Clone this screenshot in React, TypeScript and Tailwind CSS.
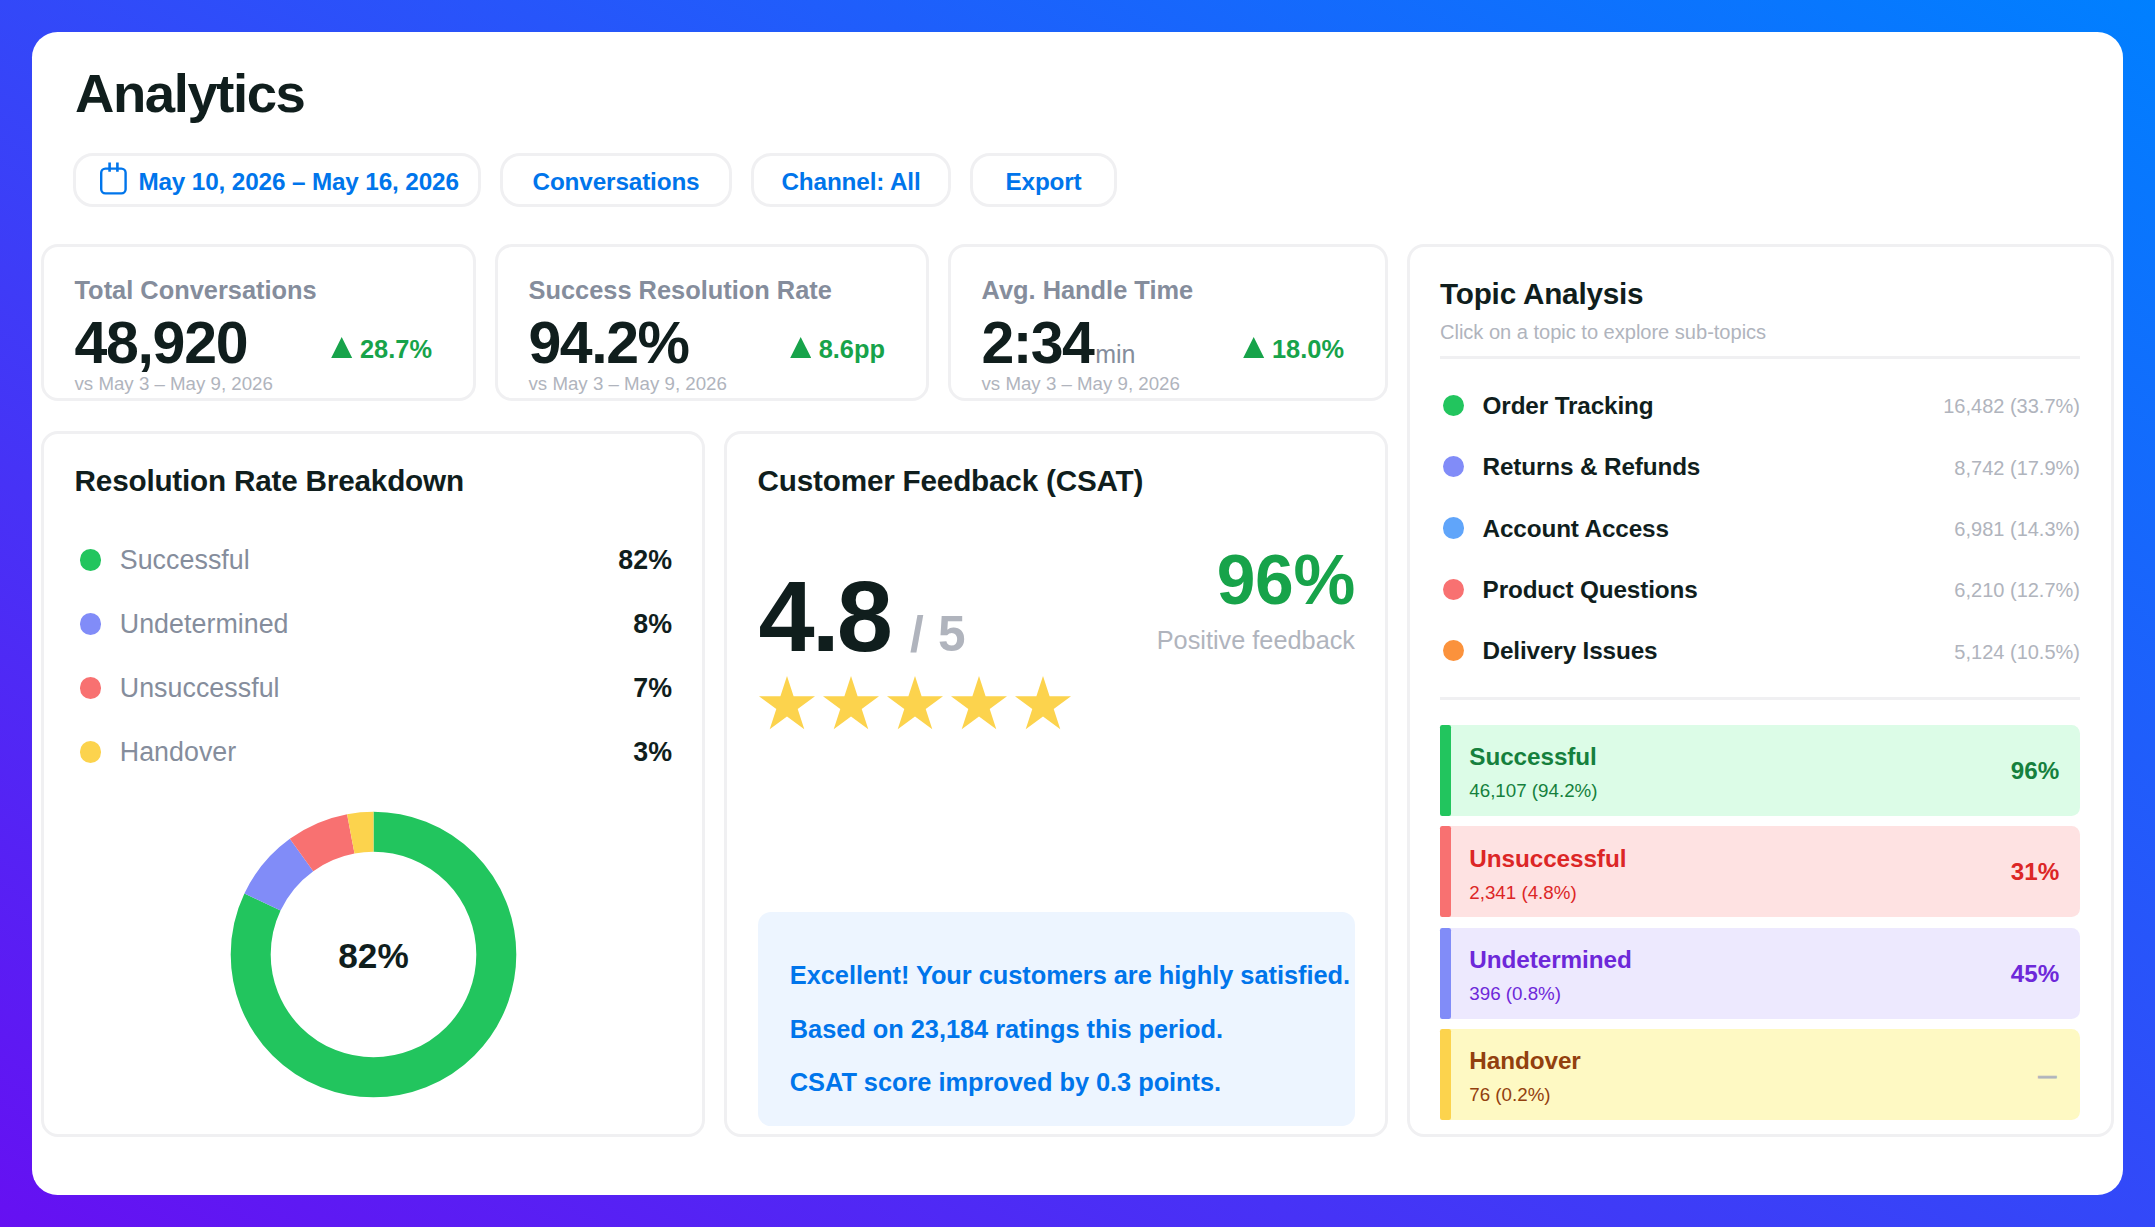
import type { ReactNode } from 'react';

const breakdown = [
  { label: 'Successful', value: 82, color: '#22c55e', dot: 'bg-[#22c55e]' },
  { label: 'Undetermined', value: 8, color: '#818cf8', dot: 'bg-[#818cf8]' },
  { label: 'Unsuccessful', value: 7, color: '#f87171', dot: 'bg-[#f87171]' },
  { label: 'Handover', value: 3, color: '#fcd34d', dot: 'bg-[#fcd34d]' },
];

const topics = [
  { name: 'Order Tracking', value: '16,482 (33.7%)', dot: 'bg-[#22c55e]' },
  { name: 'Returns & Refunds', value: '8,742 (17.9%)', dot: 'bg-[#818cf8]' },
  { name: 'Account Access', value: '6,981 (14.3%)', dot: 'bg-[#60a5fa]' },
  { name: 'Product Questions', value: '6,210 (12.7%)', dot: 'bg-[#f87171]' },
  { name: 'Delivery Issues', value: '5,124 (10.5%)', dot: 'bg-[#fb923c]' },
];

const bands = [
  { name: 'Successful', sub: '46,107 (94.2%)', pct: '96%', box: 'bg-[#dcfce7] text-[#15803d]', accent: 'bg-[#22c55e]' },
  { name: 'Unsuccessful', sub: '2,341 (4.8%)', pct: '31%', box: 'bg-[#fee2e2] text-[#dc2626]', accent: 'bg-[#f87171]' },
  { name: 'Undetermined', sub: '396 (0.8%)', pct: '45%', box: 'bg-[#ede9fe] text-[#6d28d9]', accent: 'bg-[#818cf8]' },
  { name: 'Handover', sub: '76 (0.2%)', pct: '', box: 'bg-[#fef9c3] text-[#92400e]', accent: 'bg-[#fcd34d]' },
];

function Pill({ width, children }: { width: string; children: ReactNode }) {
  return (
    <button
      className={`flex h-[54px] items-center justify-center rounded-[20px] border-[3px] border-[#f0f0f2] text-[24.3px] leading-[30px] font-bold tracking-[-0.14px] whitespace-nowrap text-[#0075eb] ${width}`}
    >
      {children}
    </button>
  );
}

function CalendarIcon() {
  return (
    <svg width="27" height="33" viewBox="0 0 27 33" fill="none" stroke="#0075eb" strokeWidth="2.4" className="-mt-[3px]">
      <rect x="1.2" y="6.6" width="24.4" height="24.8" rx="4.2" />
      <path d="M9.6 0.6v9.2M17.4 0.6v9.2" strokeWidth="2.6" />
    </svg>
  );
}

function Kpi({ width, label, value, change }: { width: string; label: string; value: ReactNode; change: string }) {
  return (
    <section
      className={`flex h-[157px] flex-col rounded-[17px] border-[3px] border-[#f0f0f2] pt-[28px] pr-[41px] pl-[30.5px] whitespace-nowrap ${width}`}
    >
      <h3 className="text-[25.4px] leading-[30px] font-bold text-[#858d9c]">{label}</h3>
      <div className="mt-[7.5px] flex h-[60px] shrink-0 justify-between">
        <div className="flex items-baseline text-[59px] leading-[60px] font-bold">{value}</div>
        <div className="mt-[21.5px] flex h-[30px] gap-[7.5px] text-[25.4px] leading-[30px] font-bold text-[#17a34a]">
          <svg width="21.4" height="21.4" viewBox="0 0 20 20" className="mt-[2.6px]">
            <path d="M10 0L20 20H0z" fill="currentColor" />
          </svg>
          {change}
        </div>
      </div>
      <p className="text-[18.7px] leading-[22px] text-[#b0b4bd]">vs May 3 – May 9, 2026</p>
    </section>
  );
}

function Heading({ children }: { children: ReactNode }) {
  return <h2 className="text-[29.7px] leading-[36px] font-bold tracking-[-0.2px] whitespace-nowrap">{children}</h2>;
}

function Donut() {
  const radius = 122.8;
  const length = 2 * Math.PI * radius;
  let start = 0;
  return (
    <svg width="287" height="287" viewBox="-143.5 -143.5 287 287" className="mt-[26.8px] self-center">
      <g transform="rotate(-90)" fill="none" strokeWidth="40">
        {breakdown.map((slice) => {
          const offset = start;
          start += slice.value;
          return (
            <circle
              key={slice.label}
              r={radius}
              stroke={slice.color}
              strokeDasharray={`${(slice.value / 100) * length} ${length}`}
              strokeDashoffset={(-offset / 100) * length}
            />
          );
        })}
      </g>
      <text x="0" y="13.8" textAnchor="middle" fill="#101e1d" className="text-[35.2px] font-bold">
        82%
      </text>
    </svg>
  );
}

function Star() {
  return (
    <svg width="56" height="54" viewBox="-28 -29.4 56 54" fill="#fcd34d">
      <path d="M0 -29.4L6.6 -9.1H28L10.7 3.5L17.3 23.8L0 11.2L-17.3 23.8L-10.7 3.5L-28 -9.1H-6.6Z" />
    </svg>
  );
}

export default function App() {
  return (
    <div className="h-[1227px] w-[2155px] overflow-hidden bg-[linear-gradient(to_top_right,#6610f2,#0080ff)] p-8 font-['Liberation_Sans',Arial,sans-serif] text-[#101e1d]">
      <main className="flex h-[1163px] w-[2091px] flex-col rounded-[25.6px] bg-white px-[9px] pt-[30px]">
        <h1 className="ml-[34px] text-[54.5px] leading-[64px] font-bold tracking-[-1.43px]">Analytics</h1>

        <div className="mt-[27px] ml-[32px] flex gap-[19px]">
          <Pill width="w-[408px]">
            <span className="flex w-full items-center pl-[24px]">
              <CalendarIcon />
              <span className="mt-[3px] ml-[11.4px]">May 10, 2026 – May 16, 2026</span>
            </span>
          </Pill>
          <Pill width="w-[232px]">
            <span className="mt-[3px]">Conversations</span>
          </Pill>
          <Pill width="w-[200px]">
            <span className="mt-[3px]">Channel: All</span>
          </Pill>
          <Pill width="w-[147px]">
            <span className="mt-[3px]">Export</span>
          </Pill>
        </div>

        <div className="mt-[37px] flex gap-[19px]">
          <div className="flex w-[1347px] flex-col gap-[30px]">
            <div className="flex gap-[19px]">
              <Kpi
                width="w-[435px]"
                label="Total Conversations"
                value={<span className="tracking-[-1.3px]">48,920</span>}
                change="28.7%"
              />
              <Kpi
                width="w-[434px]"
                label="Success Resolution Rate"
                value={<span className="tracking-[-1.45px]">94.2%</span>}
                change="8.6pp"
              />
              <Kpi
                width="w-[440px]"
                label="Avg. Handle Time"
                value={
                  <>
                    <span className="tracking-[-1.6px]">2:34</span>
                    <span className="ml-[2px] text-[25px] leading-none font-normal text-[#858d9c]">min</span>
                  </>
                }
                change="18.0%"
              />
            </div>

            <div className="flex h-[706px] gap-[19px]">
              <section className="flex w-[664px] flex-col rounded-[17px] border-[3px] border-[#f0f0f2] pt-[29px] pr-[30px] pl-[30.6px]">
                <Heading>Resolution Rate Breakdown</Heading>
                <ul className="mt-[29px]">
                  {breakdown.map((row) => (
                    <li key={row.label} className="flex h-16 items-center pl-[5.2px] text-[26.8px] leading-[32px]">
                      <span className={`size-[21.4px] rounded-full ${row.dot}`} />
                      <span className="-mt-px ml-[18.6px] tracking-[0.04px] text-[#858d9c]">{row.label}</span>
                      <span className="-mt-px ml-auto font-bold">{row.value}%</span>
                    </li>
                  ))}
                </ul>
                <Donut />
              </section>

              <section className="flex w-[664px] flex-col rounded-[17px] border-[3px] border-[#f0f0f2] pt-[29px] pr-[30px] pb-[8px] pl-[30.6px]">
                <Heading>Customer Feedback (CSAT)</Heading>
                <div className="mt-[40.5px] flex justify-between">
                  <div className="mt-[26.7px] ml-[1px]">
                    <div className="flex items-baseline leading-[100px] font-bold whitespace-nowrap">
                      <span className="text-[101px] tracking-[-3px]">4.8</span>
                      <span className="ml-[20px] text-[49.5px] leading-none tracking-[0.2px] text-[#b0b4bd]">/ 5</span>
                    </div>
                    <div className="mt-[9.8px] flex gap-[8.1px]">
                      {[0, 1, 2, 3, 4].map((n) => (
                        <Star key={n} />
                      ))}
                    </div>
                  </div>
                  <div className="text-right">
                    <div className="text-[69.5px] leading-[81px] font-bold tracking-[-0.25px] text-[#17a34a]">96%</div>
                    <div className="mt-[4px] text-[25.3px] leading-[30px] text-[#b0b4bd]">Positive feedback</div>
                  </div>
                </div>
                <div className="mt-auto h-[214px] rounded-[13px] bg-[#edf5ff] pt-[37.2px] pl-[32.2px] text-[25.4px] leading-[53.35px] font-bold tracking-[-0.04px] whitespace-nowrap text-[#0075eb]">
                  <p>Excellent! Your customers are highly satisfied.</p>
                  <p>Based on 23,184 ratings this period.</p>
                  <p>CSAT score improved by 0.3 points.</p>
                </div>
              </section>
            </div>
          </div>

          <section className="flex h-[893px] w-[707px] flex-col rounded-[17px] border-[3px] border-[#f0f0f2] pt-[29px] pr-[31px] pl-[30px]">
            <Heading>Topic Analysis</Heading>
            <p className="mt-[7.5px] text-[20.1px] leading-[24px] tracking-[-0.03px] text-[#b0b4bd]">
              Click on a topic to explore sub-topics
            </p>
            <div className="mt-[12.6px] h-[2.7px] shrink-0 bg-[#f0f0f2]" />
            <ul className="mt-[16px]">
              {topics.map((topic) => (
                <li key={topic.name} className="flex h-[61.33px] items-center pl-[3px] leading-[30px]">
                  <span className={`size-[21.4px] rounded-full ${topic.dot}`} />
                  <span className="mt-px ml-[18.2px] text-[24.3px] font-bold tracking-[-0.14px]">{topic.name}</span>
                  <span className="mt-[2px] ml-auto text-[20px] text-[#b0b4bd]">{topic.value}</span>
                </li>
              ))}
            </ul>
            <div className="mt-[15.8px] h-[2.7px] shrink-0 bg-[#f0f0f2]" />
            <ul className="mt-[25.2px] flex flex-col gap-[10.7px]">
              {bands.map((band) => (
                <li key={band.name} className={`flex h-[90.7px] rounded-[8.5px] pr-[20.8px] ${band.box}`}>
                  <span className={`w-[10.7px] rounded-[2.2px] ${band.accent}`} />
                  <div className="mt-[17.2px] ml-[18.6px]">
                    <div className="text-[24.3px] leading-[30px] font-bold tracking-[-0.08px]">{band.name}</div>
                    <div className="mt-2 text-[18.75px] leading-[22px]">{band.sub}</div>
                  </div>
                  {band.pct ? (
                    <span className="mt-px ml-auto self-center text-[24.2px] leading-[30px] font-bold">{band.pct}</span>
                  ) : (
                    <span className="mt-[3px] mr-[3px] ml-auto self-center text-[18px] leading-[22px] font-bold text-[#b0b4bd] [-webkit-text-stroke:0.8px_#b0b4bd]">
                      —
                    </span>
                  )}
                </li>
              ))}
            </ul>
          </section>
        </div>
      </main>
    </div>
  );
}
